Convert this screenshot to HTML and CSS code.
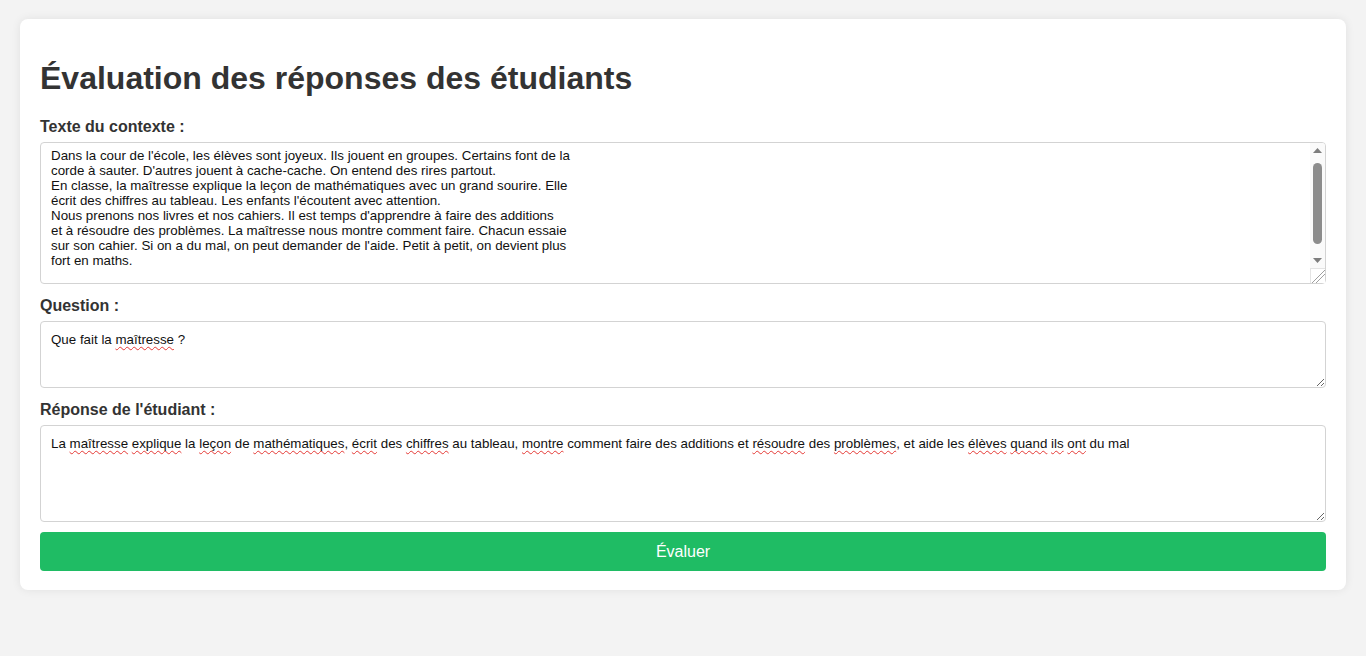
FILE: index.html
```html
<!DOCTYPE html>
<html lang="fr">
<head>
<meta charset="utf-8">
<title>Évaluation des réponses des étudiants</title>
<link rel="stylesheet" href="styles.css">
</head>
<body>
<main class="card">
  <h1 class="title">Évaluation des réponses des étudiants</h1>
  <form class="form">
    <label class="field-label" for="contexte">Texte du contexte :</label>
    <div class="context-wrap">
      <textarea id="contexte" class="field field-context" spellcheck="false">Dans la cour de l'école, les élèves sont joyeux. Ils jouent en groupes. Certains font de la
corde à sauter. D'autres jouent à cache-cache. On entend des rires partout.
En classe, la maîtresse explique la leçon de mathématiques avec un grand sourire. Elle
écrit des chiffres au tableau. Les enfants l'écoutent avec attention.
Nous prenons nos livres et nos cahiers. Il est temps d'apprendre à faire des additions
et à résoudre des problèmes. La maîtresse nous montre comment faire. Chacun essaie
sur son cahier. Si on a du mal, on peut demander de l'aide. Petit à petit, on devient plus
fort en maths.</textarea>
      <div class="fake-scrollbar" aria-hidden="true">
        <span class="sb-button">
          <svg width="9" height="5" viewBox="0 0 9 5"><path d="M0 5 L4.5 0 L9 5 Z" fill="#7d7d7d"/></svg>
        </span>
        <span class="sb-track"><span class="sb-thumb"></span></span>
        <span class="sb-button">
          <svg width="9" height="5" viewBox="0 0 9 5"><path d="M0 0 L9 0 L4.5 5 Z" fill="#7d7d7d"/></svg>
        </span>
      </div>
    </div>

    <label class="field-label" for="question">Question :</label>
    <div id="question" class="field field-question" role="textbox" contenteditable="true" spellcheck="false">Que fait la <span class="misspelled">maîtresse</span> ?</div>

    <label class="field-label" for="reponse">Réponse de l'étudiant :</label>
    <div id="reponse" class="field field-answer" role="textbox" contenteditable="true" spellcheck="false">La <span class="misspelled">maîtresse</span> <span class="misspelled">explique</span> la <span class="misspelled">leçon</span> de <span class="misspelled">mathématiques</span>, <span class="misspelled">écrit</span> des <span class="misspelled">chiffres</span> au tableau, <span class="misspelled">montre</span> comment faire des additions et <span class="misspelled">résoudre</span> des <span class="misspelled">problèmes</span>, et aide les <span class="misspelled">élèves</span> <span class="misspelled">quand</span> <span class="misspelled">ils</span> <span class="misspelled">ont</span> du mal</div>

    <button type="button" class="submit">Évaluer</button>
  </form>
</main>
</body>
</html>
```

FILE: styles.css
```css
html, body {
  margin: 0;
  padding: 0;
}

body {
  background: #f3f3f3;
  font-family: "Liberation Sans", Arial, sans-serif;
  color: #333;
  padding: 19px 20px;
  box-sizing: border-box;
  min-height: 100vh;
}

.card {
  background: #fff;
  border-radius: 8px;
  box-shadow: 0 0 10px rgba(0, 0, 0, 0.08);
  padding: 20px 20px 19px;
}

.title {
  font-size: 32px;
  font-weight: bold;
  margin: 21px 0 21px;
  line-height: 37px;
  color: #333;
}

.form {
  display: flex;
  flex-direction: column;
}

.field-label {
  display: block;
  font-size: 16px;
  font-weight: bold;
  line-height: 18px;
  margin-bottom: 6px;
  color: #333;
}

.field {
  box-sizing: border-box;
  width: 100%;
  border: 1px solid #d3d3d3;
  border-radius: 4px;
  padding: 10px;
  font-family: "Liberation Sans", Arial, sans-serif;
  font-size: 13.333px;
  line-height: 15px;
  color: #111;
  background: #fff;
  margin: 0 0 13px;
  outline: none;
}

.context-wrap {
  position: relative;
}

.field-context {
  display: block;
  height: 142px;
  resize: vertical;
  overflow: hidden;
  white-space: pre;
  padding: 5px 26px 10px 10px;
}

.field-context::-webkit-resizer {
  background-color: #fff;
  border-top: 1px solid #e4e4e4;
  border-left: 1px solid #e4e4e4;
  background-image:
    linear-gradient(135deg, transparent 10px, #a0a0a0 10px, #a0a0a0 11px, transparent 11px, transparent 13px, #a0a0a0 13px, #a0a0a0 14px, transparent 14px);
}

.fake-scrollbar {
  position: absolute;
  top: 1px;
  right: 1px;
  width: 15px;
  height: 125px;
  display: flex;
  flex-direction: column;
  background: #fafafa;
  border-top-right-radius: 3px;
}

.sb-button {
  display: flex;
  align-items: center;
  justify-content: center;
  height: 15px;
  flex: none;
}

.sb-button svg {
  display: block;
}

.sb-track {
  flex: 1;
  display: flex;
  justify-content: center;
  padding-top: 5px;
}

.sb-thumb {
  display: block;
  width: 9px;
  height: 81px;
  background: #8c8c8c;
  border-radius: 5px;
}

.field-question {
  height: 67px;
  resize: vertical;
  overflow: auto;
}

.field-answer {
  height: 97px;
  resize: vertical;
  overflow: auto;
  margin-bottom: 10px;
}

.misspelled {
  text-decoration: underline wavy #e53935;
  text-decoration-thickness: 1px;
  text-underline-offset: 2px;
  text-decoration-skip-ink: none;
}

.submit {
  display: block;
  width: 100%;
  border: none;
  border-radius: 4px;
  background: #1fbc64;
  color: #fff;
  font-family: "Liberation Sans", Arial, sans-serif;
  font-size: 16px;
  line-height: 19px;
  padding: 10px;
  cursor: pointer;
}
```
